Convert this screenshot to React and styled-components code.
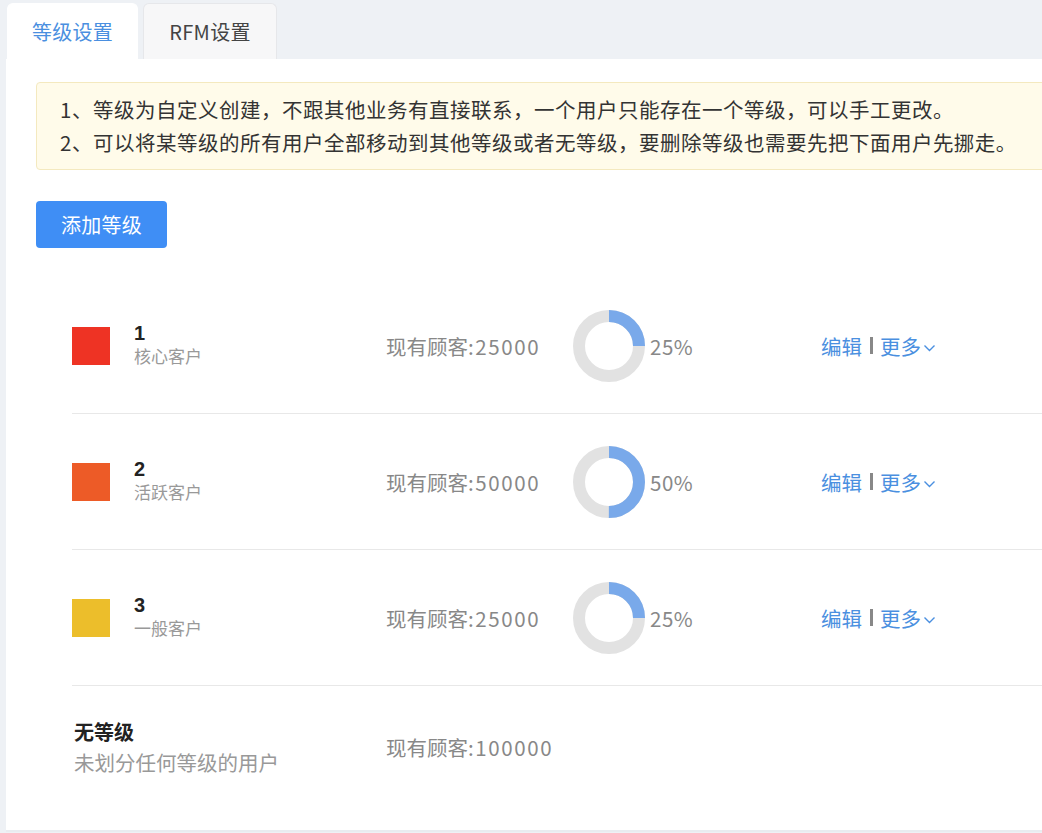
import React from "react";
import styled, { createGlobalStyle } from "styled-components";

const Global = createGlobalStyle`
  html, body { margin: 0; padding: 0; }
  body {
    background: #eef1f5;
    overflow: hidden;
    font-family: "Noto Sans CJK SC", "Noto Sans", sans-serif;
    color: #333;
  }
`;

const Page = styled.div`
  padding: 3px 0 0 6px;
  width: 1036px;
`;

const TabBar = styled.div`
  display: flex;
  gap: 5px;
  padding-left: 1px;
  height: 56px;
`;

const Tab = styled.div`
  width: ${(p) => (p.$active ? 131 : 134)}px;
  box-sizing: border-box;
  height: 56px;
  border-radius: 6px 6px 0 0;
  display: flex;
  align-items: center;
  justify-content: center;
  font-size: 20px;
  letter-spacing: 0.3px;
  background: ${(p) => (p.$active ? "#fff" : "#f7f7f8")};
  color: ${(p) => (p.$active ? "#4a8fe0" : "#444")};
  border: 1px solid ${(p) => (p.$active ? "#fff" : "#e6e7ea")};
  border-bottom: none;
`;

const Panel = styled.div`
  background: #fff;
  padding: 23px 0 22px 30px;
  border-bottom: 2px solid #e9ecf0;
  overflow: hidden;
`;

const Alert = styled.div`
  width: 1100px;
  box-sizing: border-box;
  background: #fffbea;
  border: 1px solid #f4e9bf;
  border-radius: 4px;
  padding: 10px 23px;
  font-size: 20.5px;
  letter-spacing: 0.5px;
  line-height: 33px;
  color: #333;
`;

const AddButton = styled.button`
  margin-top: 31px;
  width: 131px;
  height: 47px;
  border: none;
  border-radius: 4px;
  background: #3f8ef5;
  color: #fff;
  font-family: inherit;
  font-size: 20px;
  letter-spacing: 0.3px;
  display: block;
`;

const List = styled.div`
  margin: 30px 0 0 36px;
`;

const Row = styled.div`
  display: grid;
  grid-template-columns: 62px 252px 187px 77px 171px auto;
  align-items: center;
  height: ${(p) => (p.$last ? 122 : 135)}px;
  border-bottom: ${(p) => (p.$last ? "none" : "1px solid #e8e8e8")};
`;

const Swatch = styled.div`
  width: 38px;
  height: 38px;
  background: ${(p) => p.$color};
`;

const NameBlock = styled.div`
  display: flex;
  flex-direction: column;
  grid-column: ${(p) => (p.$wide ? "1 / span 2" : "auto")};
  padding-left: ${(p) => (p.$wide ? 2 : 0)}px;
  margin-top: ${(p) => (p.$wide ? 0 : -3)}px;
`;

const Title = styled.div`
  font-weight: 700;
  font-size: 20px;
  line-height: ${(p) => (p.$wide ? 30 : 23)}px;
  font-family: ${(p) =>
    p.$wide ? "inherit" : '"Liberation Sans", "Noto Sans CJK SC", sans-serif'};
  color: #222;
`;

const Sub = styled.div`
  font-size: ${(p) => (p.$wide ? 20.5 : 17)}px;
  line-height: ${(p) => (p.$wide ? 30 : 22)}px;
  color: #999;
`;

const Count = styled.div`
  font-size: 20.5px;
  color: #888;
  white-space: nowrap;
`;

const Num = styled.span`
  letter-spacing: 1.6px;
`;

const DonutWrap = styled.div`
  width: 72px;
  height: 72px;
  display: flex;
`;

const Percent = styled.div`
  font-size: 20.5px;
  letter-spacing: 0.5px;
  color: #888;
`;

const Actions = styled.div`
  display: flex;
  align-items: center;
  font-size: 20.5px;
  color: #4a8fe0;
`;

const Divider = styled.span`
  display: inline-block;
  width: 3px;
  height: 17px;
  background: #888;
  margin: 0 7px 0 8px;
`;

const Chevron = () => (
  <svg width="13" height="10" viewBox="0 0 13 10" style={{ marginLeft: 2, marginTop: 4 }}>
    <path d="M1.5 2.5 L6.5 7.5 L11.5 2.5" fill="none" stroke="#4a8fe0" strokeWidth="1.4" />
  </svg>
);

const Donut = ({ pct }) => {
  const r = 30;
  const c = 2 * Math.PI * r;
  return (
    <DonutWrap>
      <svg width="72" height="72" viewBox="0 0 72 72">
        <circle cx="36" cy="36" r={r} fill="none" stroke="#e2e2e2" strokeWidth="12" />
        <circle
          cx="36"
          cy="36"
          r={r}
          fill="none"
          stroke="#79a9ea"
          strokeWidth="12"
          strokeDasharray={`${(c * pct) / 100} ${c}`}
          transform="rotate(-90 36 36)"
        />
      </svg>
    </DonutWrap>
  );
};

const levels = [
  { n: "1", name: "核心客户", color: "#ee3324", count: 25000, pct: 25 },
  { n: "2", name: "活跃客户", color: "#ed5b27", count: 50000, pct: 50 },
  { n: "3", name: "一般客户", color: "#ecbe2b", count: 25000, pct: 25 },
];

export default function App() {
  return (
    <>
      <Global />
      <Page>
        <TabBar>
          <Tab $active>等级设置</Tab>
          <Tab>RFM设置</Tab>
        </TabBar>
        <Panel>
          <Alert>
            <div>1、等级为自定义创建，不跟其他业务有直接联系，一个用户只能存在一个等级，可以手工更改。</div>
            <div>2、可以将某等级的所有用户全部移动到其他等级或者无等级，要删除等级也需要先把下面用户先挪走。</div>
          </Alert>
          <AddButton>添加等级</AddButton>
          <List>
            {levels.map((l) => (
              <Row key={l.n}>
                <Swatch $color={l.color} />
                <NameBlock>
                  <Title>{l.n}</Title>
                  <Sub>{l.name}</Sub>
                </NameBlock>
                <Count>
                  现有顾客<Num>:{l.count}</Num>
                </Count>
                <Donut pct={l.pct} />
                <Percent>{l.pct}%</Percent>
                <Actions>
                  编辑<Divider />更多<Chevron />
                </Actions>
              </Row>
            ))}
            <Row $last>
              <NameBlock $wide>
                <Title $wide>无等级</Title>
                <Sub $wide>未划分任何等级的用户</Sub>
              </NameBlock>
              <Count>
                现有顾客<Num>:100000</Num>
              </Count>
            </Row>
          </List>
        </Panel>
      </Page>
    </>
  );
}
